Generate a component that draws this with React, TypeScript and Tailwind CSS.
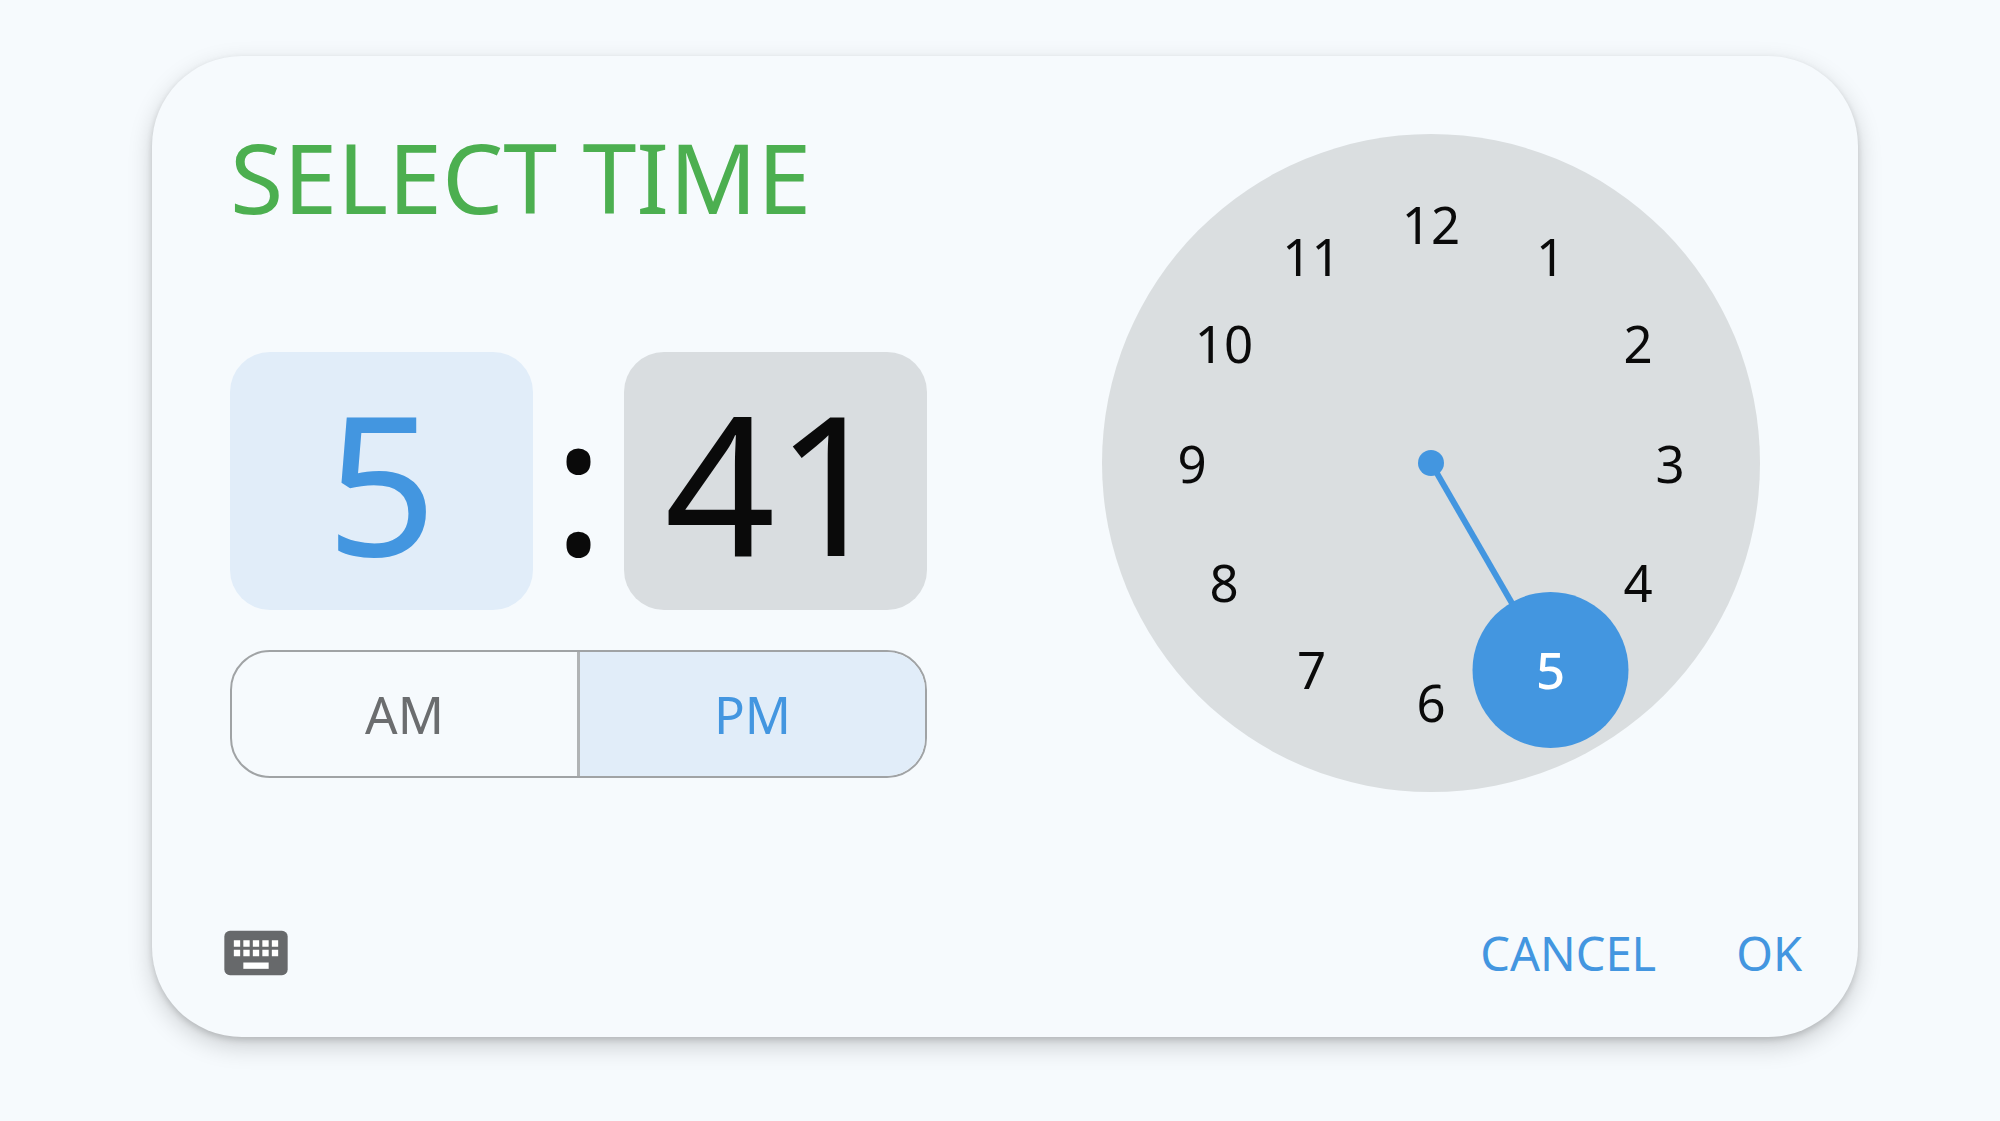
import { useState } from 'react'
import clsx from 'clsx'

const hours = [12, 1, 2, 3, 4, 5, 6, 7, 8, 9, 10, 11]

// dial is drawn in a 658 x 658 box
const SIZE = 658
const CENTER = SIZE / 2
const RADIUS = 239

function getPoint(hour: number) {
  const angle = (hour * Math.PI) / 6
  return { x: CENTER + RADIUS * Math.sin(angle), y: CENTER - RADIUS * Math.cos(angle) }
}

function KeyboardIcon() {
  return (
    <svg viewBox="0 0 24 24" className="size-[76px]" aria-hidden="true">
      <rect x="2" y="5" width="20" height="14" rx="1.8" fill="#67696b" />
      <g fill="#fff">
        {[5, 8, 11, 14, 17].map((x) => (
          <path key={x} d={`M${x} 8h2v2h-2zM${x} 11h2v2h-2z`} />
        ))}
        <path d="M8 15h8v2H8z" />
      </g>
    </svg>
  )
}

function Dial({ hour, onChange }: { hour: number; onChange: (h: number) => void }) {
  const hand = getPoint(hour)

  return (
    <div className="relative aspect-square w-full max-w-[658px] rounded-full bg-[#dadee0]">
      <svg viewBox="0 0 658 658" className="block w-full" aria-hidden="true">
        <g fill="#4396e0" stroke="#4396e0">
          <line x1={CENTER} y1={CENTER} x2={hand.x} y2={hand.y} strokeWidth="6" />
          <circle cx={CENTER} cy={CENTER} r="13" stroke="none" />
          <circle cx={hand.x} cy={hand.y} r="78" stroke="none" />
        </g>
      </svg>
      {hours.map((h) => {
        const p = getPoint(h)
        return (
          <button
            key={h}
            type="button"
            onClick={() => onChange(h)}
            className={clsx('absolute size-24 -translate-1/2 rounded-full text-[51px] leading-none', h === hour ? 'font-medium text-white' : 'text-[#0a0a0a]')}
            style={{ left: `${(p.x / SIZE) * 100}%`, top: `${(p.y / SIZE) * 100}%` }}
          >
            {h}
          </button>
        )
      })}
    </div>
  )
}

export default function App() {
  const [hour, setHour] = useState(5)
  const [field, setField] = useState('hour')
  const [period, setPeriod] = useState('PM')

  const box = 'h-[258px] flex-1 rounded-[40px] text-[194px] leading-none'
  const active = 'bg-[#e1edf9] text-[#4396e0]'

  return (
    <main className="min-h-screen bg-[#f6fafd] pt-14 pr-[142px] pb-20 pl-[152px] font-['Noto_Sans',sans-serif] text-[#0a0a0a]">
      <section className="rounded-[90px] bg-[#f6fafd] pt-[78px] pb-[46px] shadow-[0_9px_24px_rgba(0,0,0,0.18),0_3px_6px_rgba(0,0,0,0.14)]">
        <div className="flex justify-between gap-16 pr-[98px] pl-[78px]">
          <div className="w-full max-w-[697px]">
            <h1 className="text-[97px] leading-[84px] whitespace-nowrap text-[#4caf50]">SELECT TIME</h1>

            <div className="mt-[134px] flex">
              <button type="button" aria-label="Hour" onClick={() => setField('hour')} className={clsx(box, field === 'hour' ? active : 'bg-[#d9dde0]')}>
                {hour}
              </button>
              <span className="w-[91px] text-center text-[194px] leading-[256px]">:</span>
              <button type="button" aria-label="Minute" onClick={() => setField('minute')} className={clsx(box, field === 'minute' ? active : 'bg-[#d9dde0]')}>
                41
              </button>
            </div>

            <div className="mt-10 flex h-32 divide-x-3 divide-[#b0b3b5] overflow-hidden rounded-[40px] border-2 border-[#a0a3a5]">
              {['AM', 'PM'].map((p) => (
                <button key={p} type="button" onClick={() => setPeriod(p)} className={clsx('flex-1 text-[51px] leading-none', period === p ? active : 'text-[#6b6d6f]')}>
                  {p}
                </button>
              ))}
            </div>
          </div>

          <Dial hour={hour} onChange={setHour} />
        </div>

        <div className="mt-[123px] flex items-center pr-14 pl-[66px]">
          <button type="button" aria-label="Switch to keyboard input">
            <KeyboardIcon />
          </button>
          <button type="button" className="ml-auto text-[47px] leading-none text-[#4396e0]">CANCEL</button>
          <button type="button" className="ml-20 text-[47px] leading-none text-[#4396e0]">OK</button>
        </div>
      </section>
    </main>
  )
}
